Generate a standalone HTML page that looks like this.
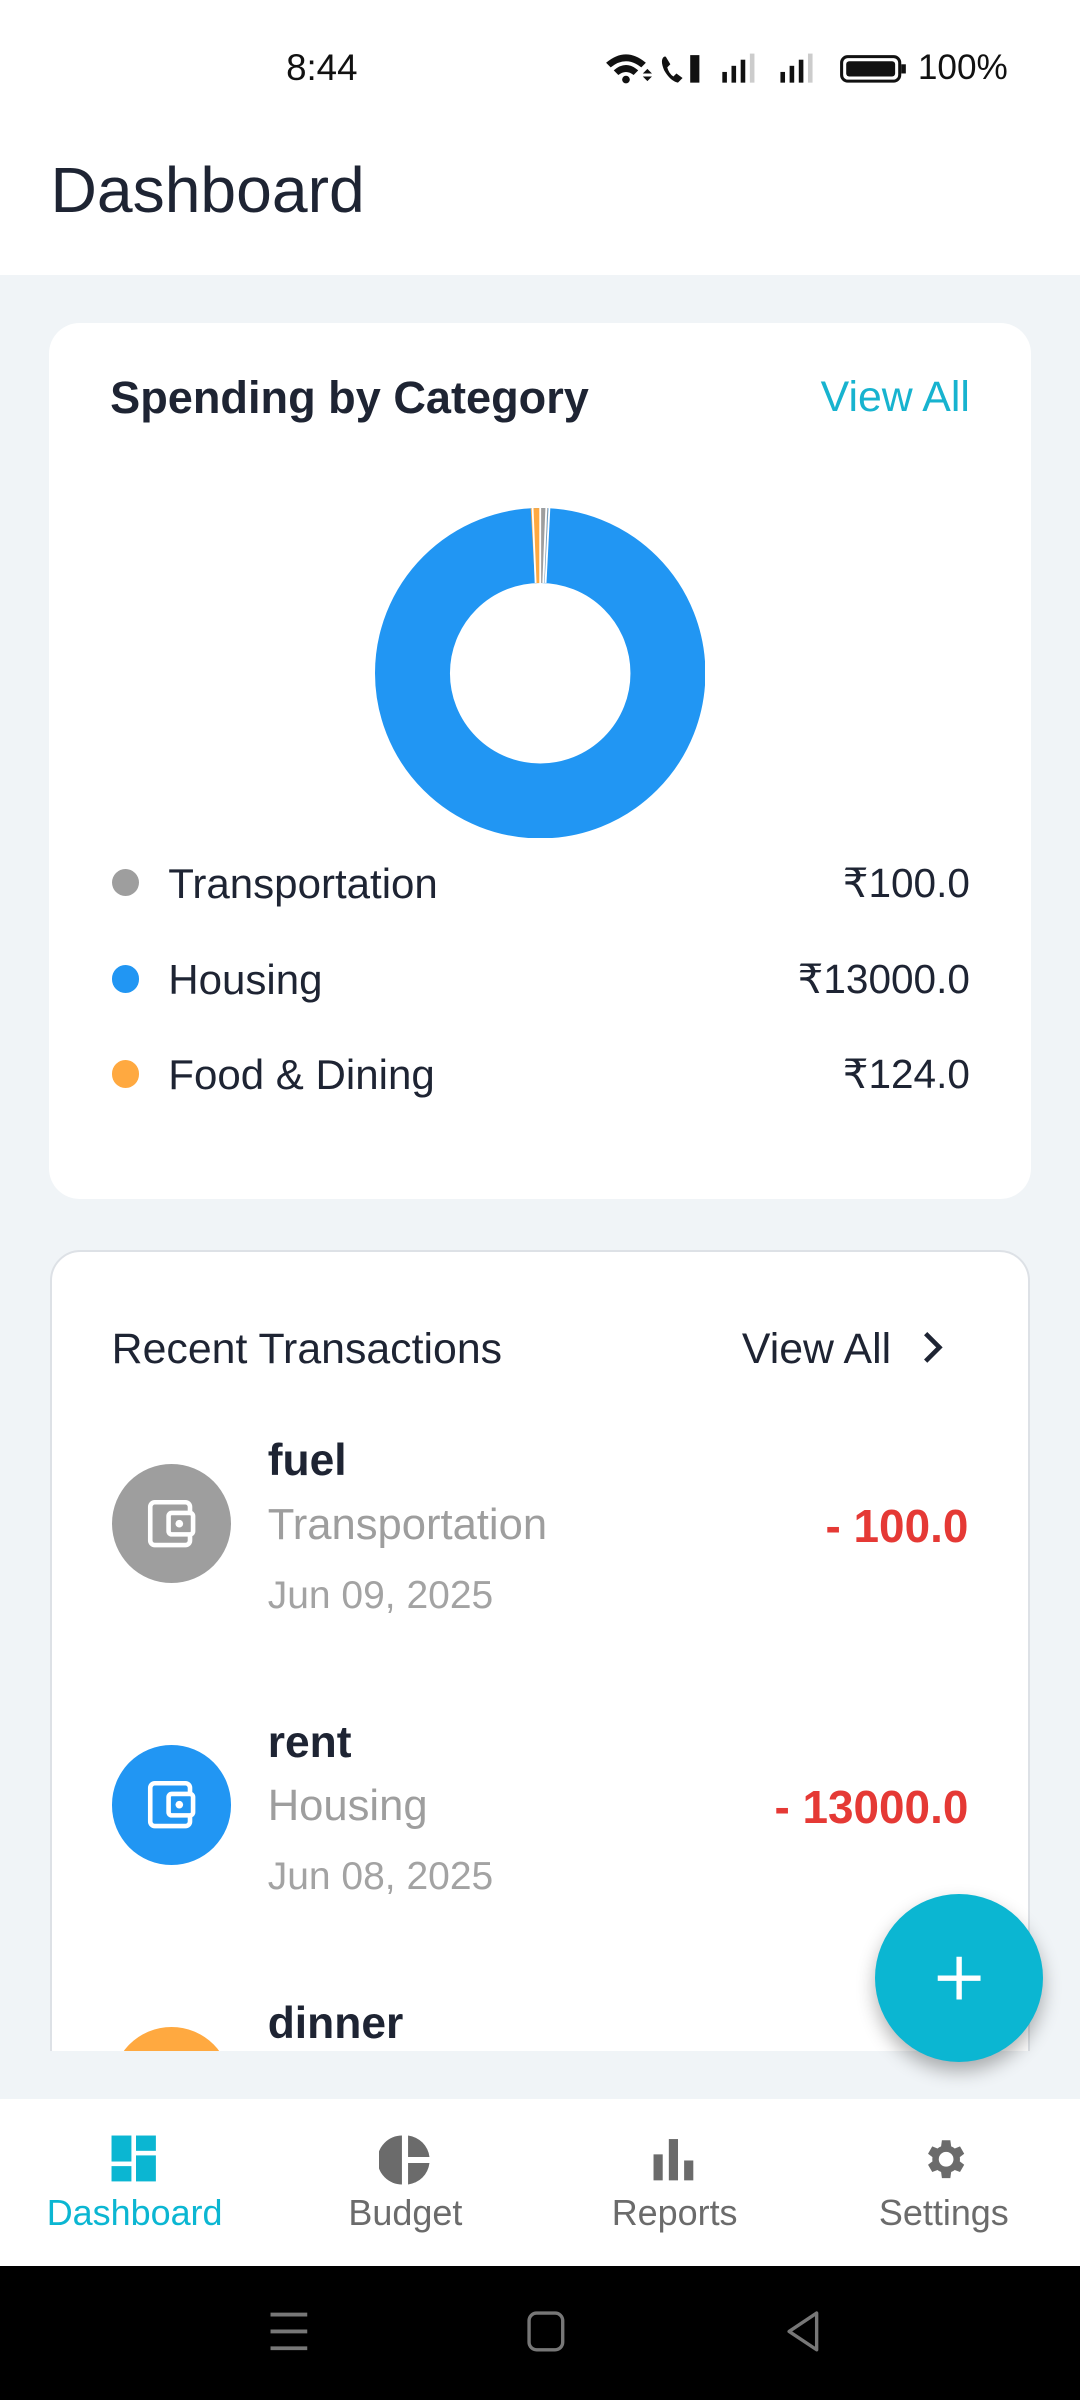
<!DOCTYPE html>
<html><head><meta charset="utf-8">
<style>
html{zoom:1.52975}
body{margin:0;width:706px;height:1569px;position:relative;overflow:hidden;background:#f0f4f7;font-family:"Liberation Sans",sans-serif;}
.abs{position:absolute}
.t{position:absolute;white-space:nowrap;line-height:1}
</style></head><body>
<div class="abs" style="left:0;top:0;width:706px;height:180px;background:#fff"></div>
<div class="t" style="left:187px;top:33px;font-size:24px;color:#111">8:44</div>
<svg class="abs" style="left:394px;top:32px" width="200" height="24" viewBox="0 0 200 24">
 <path d="M2 9 Q15 -2 28 9 L25 12 Q15 4 5 12Z M7 14 Q15 7 23 14 L20 17 Q15 13 10 17Z" fill="#111"/><circle cx="15" cy="20" r="2.5" fill="#111"/>
 <path d="M26 16 l3-3 3 3z M26 18 l3 3 3-3z" fill="#111"/>
 <path d="M40 5 q-3 2 0 9 q4 7 9 8 l3-3 -4-3 -2 2 q-3-2 -4-6 l2-2 -3-5z" fill="#111"/>
 <rect x="57" y="4" width="6" height="18" fill="#111"/>
 <rect x="78" y="15" width="3" height="7" fill="#111"/><rect x="84" y="11" width="3" height="11" fill="#111"/><rect x="90" y="7" width="3" height="15" fill="#111"/><rect x="96" y="3" width="3" height="19" fill="#ccc"/>
 <rect x="116" y="15" width="3" height="7" fill="#111"/><rect x="122" y="11" width="3" height="11" fill="#111"/><rect x="128" y="7" width="3" height="15" fill="#111"/><rect x="134" y="3" width="3" height="19" fill="#ccc"/>
 <rect x="156" y="5" width="38" height="16" rx="4" fill="none" stroke="#111" stroke-width="2"/><rect x="159" y="8" width="32" height="10" rx="2" fill="#111"/><rect x="195" y="10" width="3" height="6" fill="#111"/>
</svg>
<div class="t" style="left:600px;top:33px;font-size:23px;color:#111">100%</div>
<div class="t" style="left:33px;top:103px;font-size:42px;color:#1e2433">Dashboard</div>

<div class="abs" style="left:32px;top:211px;width:642px;height:573px;background:#fff;border-radius:20px"></div>
<div class="t" style="left:72px;top:245px;font-size:29.5px;font-weight:bold;color:#1e2433">Spending by Category</div>
<div class="t" style="right:72px;top:246px;font-size:28px;color:#17b3cf">View All</div>
<svg class="abs" style="left:245px;top:332px" width="216" height="216" viewBox="0 0 216 216">
 <circle cx="108" cy="108" r="83.5" fill="none" stroke="#2196f3" stroke-width="49"/>
 <g transform="rotate(-90 108 108)">
  <circle cx="108" cy="108" r="83.5" fill="none" stroke="#9e9e9e" stroke-width="49" stroke-dasharray="4 520.6"/>
  <circle cx="108" cy="108" r="83.5" fill="none" stroke="#ffa940" stroke-width="49" stroke-dasharray="5 519.6" stroke-dashoffset="5"/>
 </g>
 <line x1="108" y1="0" x2="108" y2="49" stroke="#fff" stroke-width="1.2"/>
 <line x1="112" y1="0" x2="110" y2="49" stroke="#fff" stroke-width="1.2"/>
 <line x1="103" y1="0" x2="105" y2="49" stroke="#fff" stroke-width="1.2"/>
 <line x1="114" y1="0" x2="111.5" y2="49" stroke="#fff" stroke-width="1.2"/>
</svg>
<div class="abs" style="left:73px;top:568px;width:18px;height:18px;border-radius:50%;background:#9e9e9e"></div>
<div class="abs" style="left:73px;top:631px;width:18px;height:18px;border-radius:50%;background:#2196f3"></div>
<div class="abs" style="left:73px;top:693px;width:18px;height:18px;border-radius:50%;background:#ffa940"></div>
<div class="t" style="left:110px;top:564px;font-size:27.5px;color:#1e2433">Transportation</div>
<div class="t" style="left:110px;top:627px;font-size:27.5px;color:#1e2433">Housing</div>
<div class="t" style="left:110px;top:689px;font-size:27.5px;color:#1e2433">Food &amp; Dining</div>
<div class="t" style="right:72px;top:564px;font-size:26.5px;color:#1e2433">₹100.0</div>
<div class="t" style="right:72px;top:627px;font-size:26.5px;color:#1e2433">₹13000.0</div>
<div class="t" style="right:72px;top:689px;font-size:26.5px;color:#1e2433">₹124.0</div>

<div class="abs" style="left:33px;top:817px;width:638px;height:540px;background:#fff;border:1.5px solid #dde1e6;border-radius:20px;overflow:hidden"></div>
<div class="t" style="left:73px;top:868px;font-size:28px;color:#1e2433">Recent Transactions</div>
<div class="t" style="left:485px;top:868px;font-size:28px;color:#1e2433">View All</div>
<svg class="abs" style="left:600px;top:869px" width="20" height="24" viewBox="0 0 20 24"><path d="M5 3 L14 12 L5 21" fill="none" stroke="#1e2433" stroke-width="3"/></svg>

<svg width="0" height="0" style="position:absolute"><defs><g id="w"><rect x="-14" y="-14" width="26" height="28" rx="3" fill="none" stroke="#fff" stroke-width="3"/><rect x="-2" y="-7" width="16" height="14" rx="2" fill="currentColor" stroke="#fff" stroke-width="3"/><circle cx="5" cy="0" r="2.5" fill="#fff"/></g></defs></svg>
<div class="abs" style="left:73px;top:957px;width:78px;height:78px;border-radius:50%;background:#9e9e9e"></div>
<svg class="abs" style="left:73px;top:957px;color:#9e9e9e" width="78" height="78" viewBox="-39 -39 78 78"><use href="#w"/></svg>
<div class="t" style="left:175px;top:941px;font-size:29px;font-weight:bold;color:#1e2433">fuel</div>
<div class="t" style="left:175px;top:983px;font-size:28.5px;color:#9e9e9e">Transportation</div>
<div class="t" style="left:175px;top:1030px;font-size:25.5px;color:#a3a3a3">Jun 09, 2025</div>
<div class="t" style="right:73px;top:983px;font-size:30px;font-weight:bold;color:#e53935">- 100.0</div>

<div class="abs" style="left:73px;top:1141px;width:78px;height:78px;border-radius:50%;background:#2196f3"></div>
<svg class="abs" style="left:73px;top:1141px;color:#2196f3" width="78" height="78" viewBox="-39 -39 78 78"><use href="#w"/></svg>
<div class="t" style="left:175px;top:1125px;font-size:29px;font-weight:bold;color:#1e2433">rent</div>
<div class="t" style="left:175px;top:1167px;font-size:28.5px;color:#9e9e9e">Housing</div>
<div class="t" style="left:175px;top:1214px;font-size:25.5px;color:#a3a3a3">Jun 08, 2025</div>
<div class="t" style="right:73px;top:1167px;font-size:30px;font-weight:bold;color:#e53935">- 13000.0</div>

<div class="abs" style="left:73px;top:1325px;width:78px;height:78px;border-radius:50%;background:#ffa940"></div>
<div class="t" style="left:175px;top:1309px;font-size:29px;font-weight:bold;color:#1e2433">dinner</div>
<div class="abs" style="left:0;top:1341px;width:706px;height:31px;background:#f0f4f7"></div>

<div class="abs" style="left:572px;top:1238px;width:110px;height:110px;border-radius:50%;background:#0bb6d2;box-shadow:0 6px 12px rgba(0,0,0,.3)"></div>
<svg class="abs" style="left:572px;top:1238px" width="110" height="110"><path d="M55 41 V69 M41 55 H69" stroke="#fff" stroke-width="3.5"/></svg>

<div class="abs" style="left:0;top:1372px;width:706px;height:109px;background:#fff"></div>
<svg class="abs" style="left:72px;top:1395px" width="32" height="32" viewBox="0 0 32 32" fill="#0bb6d2"><rect x="1" y="1" width="13" height="17"/><rect x="1" y="21" width="13" height="10"/><rect x="17" y="1" width="13" height="10"/><rect x="17" y="14" width="13" height="17"/></svg>
<svg class="abs" style="left:248px;top:1395px" width="34" height="34" viewBox="0 0 34 34" fill="#6b6b6b"><path d="M15 1 A16 16 0 0 0 15 33Z"/><path d="M19 1 A16 16 0 0 1 33 15 H19Z"/><path d="M19 19 H33 A16 16 0 0 1 19 33Z"/></svg>
<svg class="abs" style="left:426px;top:1396px" width="30" height="30" viewBox="0 0 30 30" fill="#6b6b6b"><rect x="1" y="12" width="6" height="17"/><rect x="11" y="2" width="6" height="27"/><rect x="21" y="16" width="6" height="13"/></svg>
<svg class="abs" style="left:601px;top:1395px" width="33" height="33" viewBox="0 0 24 24" fill="#6b6b6b"><path d="M19.4 13a7.5 7.5 0 0 0 0-2l2.1-1.6-2-3.5-2.5 1a7 7 0 0 0-1.7-1L14.9 3h-4l-.4 2.9a7 7 0 0 0-1.7 1l-2.5-1-2 3.5L6.4 11a7.5 7.5 0 0 0 0 2l-2.1 1.6 2 3.5 2.5-1a7 7 0 0 0 1.7 1l.4 2.9h4l.4-2.9a7 7 0 0 0 1.7-1l2.5 1 2-3.5zM12.9 15.5a3.5 3.5 0 1 1 0-7 3.5 3.5 0 0 1 0 7z"/></svg>
<div class="t" style="left:88px;top:1435px;transform:translateX(-50%);font-size:23.5px;color:#0bb6d2">Dashboard</div>
<div class="t" style="left:265px;top:1435px;transform:translateX(-50%);font-size:23.5px;color:#6b6b6b">Budget</div>
<div class="t" style="left:441px;top:1435px;transform:translateX(-50%);font-size:23.5px;color:#6b6b6b">Reports</div>
<div class="t" style="left:617px;top:1435px;transform:translateX(-50%);font-size:23.5px;color:#6b6b6b">Settings</div>

<div class="abs" style="left:0;top:1481px;width:706px;height:88px;background:#000"></div>
<svg class="abs" style="left:176px;top:1510px" width="26" height="28"><path d="M1 3H25M1 14H25M1 25H25" stroke="#777" stroke-width="2.5"/></svg>
<svg class="abs" style="left:344px;top:1510px" width="26" height="28"><rect x="2" y="2" width="22" height="24" rx="5" fill="none" stroke="#777" stroke-width="2.2"/></svg>
<svg class="abs" style="left:512px;top:1510px" width="26" height="28"><path d="M22 2 V26 L4 14Z" fill="none" stroke="#777" stroke-width="2.2" stroke-linejoin="round"/></svg>
</body></html>
